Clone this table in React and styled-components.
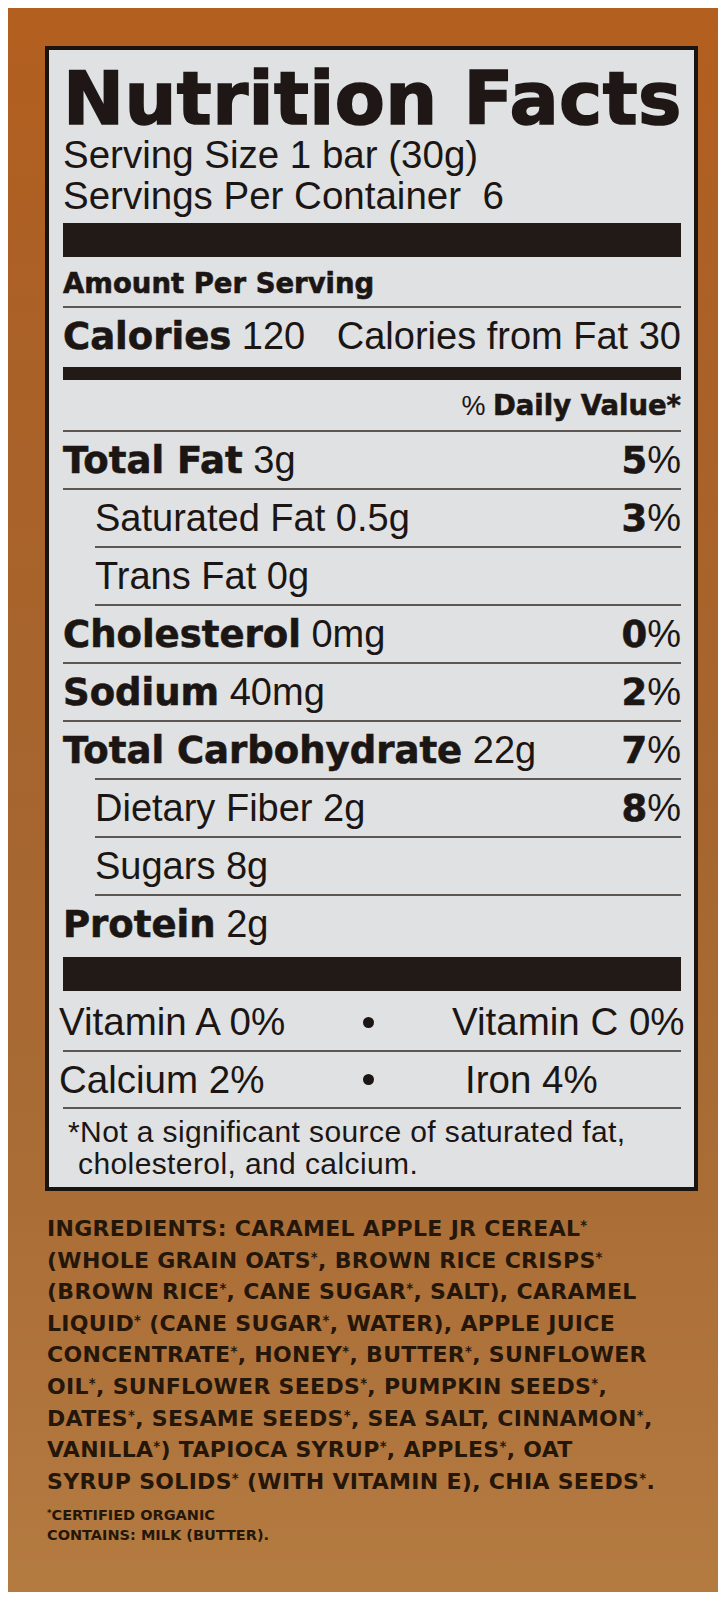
import React from 'react'
import styled, { createGlobalStyle } from 'styled-components'

const GlobalStyle = createGlobalStyle`
  html, body {
    margin: 0;
    padding: 0;
    background: #fff;
  }
  body {
    font-family: 'Liberation Sans', Arial, sans-serif;
    color: #1b1614;
  }
`

const Box = styled.div`
  margin: 8px 9px 8px 8px;
  height: 1584px;
  box-sizing: border-box;
  padding: 38px 0 0 37px;
  background: linear-gradient(
    180deg,
    #b35f1f 0%,
    #ab6127 20%,
    #a6652f 50%,
    #aa6d36 75%,
    #b47b41 100%
  );
`

const Label = styled.section`
  width: 653px;
  box-sizing: border-box;
  border: 4px solid #1a1411;
  background: #dfe1e2;
  padding: 0 13px 7px 14px;
  white-space: nowrap;
`

const Title = styled.h1`
  margin: 0;
  padding-top: 13px;
  font-family: 'DejaVu Sans', sans-serif;
  font-weight: 700;
  font-size: 73px;
  line-height: 71px;
  letter-spacing: 0.4px;
  color: #1e1715;
  -webkit-text-stroke: 1.6px #1e1715;
`

const ServingLine = styled.div`
  font-size: 38.5px;
  line-height: 41px;
`

const Bar = styled.div`
  height: ${p => p.$h}px;
  margin-top: ${p => p.$top}px;
  background: #211a16;
`

const Rule = styled.div`
  height: 2px;
  margin-left: ${p => p.$inset || 0}px;
  background: #5d5753;
`

const SmallHead = styled.div`
  padding-top: ${p => p.$top || 0}px;
  height: ${p => p.$h}px;
  line-height: ${p => p.$h}px;
  text-align: ${p => (p.$right ? 'right' : 'left')};
`

const Row = styled.div`
  display: flex;
  justify-content: space-between;
  align-items: baseline;
  height: ${p => p.$h || 56}px;
  line-height: ${p => p.$h || 56}px;
  padding-left: ${p => p.$indent || 0}px;
`

const Heavy = styled.span`
  font-family: 'DejaVu Sans', sans-serif;
  font-weight: 700;
  font-size: ${p => p.$size || 37}px;
  -webkit-text-stroke: 0.6px #1b1614;
`

const Plain = styled.span`
  font-family: 'Liberation Sans', Arial, sans-serif;
  font-size: ${p => p.$size || 38}px;
`

const VitRow = styled.div`
  display: grid;
  grid-template-columns: 289px 40px 1fr;
  align-items: center;
  padding-top: ${p => p.$top || 0}px;
  height: ${p => p.$h}px;
  line-height: ${p => p.$h}px;
  margin-left: -4px;
  margin-right: -3px;
  font-size: 38.5px;
`

const Dot = styled.span`
  justify-self: center;
  width: 11px;
  height: 11px;
  border-radius: 50%;
  background: #1b1614;
`

const VitRight = styled.span`
  padding-left: ${p => p.$pad}px;
`

const Footnote = styled.p`
  margin: 0;
  padding: 7px 0 0 15px;
  text-indent: -10px;
  font-size: 30px;
  line-height: 32px;
  letter-spacing: 0.4px;
  white-space: normal;
`

const Ingredients = styled.div`
  margin-top: 19px;
  padding-left: 2px;
  font-family: 'DejaVu Sans', sans-serif;
  font-weight: 700;
  font-size: 22px;
  color: #25160a;
  white-space: nowrap;
`

const IngLine = styled.div`
  height: 31.6px;
  line-height: 31.6px;
  letter-spacing: 0.3px;
`

const Star = styled.span`
  font-size: 0.6em;
  vertical-align: 0.45em;
`

const Small = styled.div`
  margin-top: ${p => p.$top || 0}px;
  font-size: 14.5px;
  line-height: 20px;
`

const nutrients = [
  { label: 'Total Fat', amount: '3g', dv: '5', bold: true, rule: 0, indent: 0 },
  { label: 'Saturated Fat', amount: '0.5g', dv: '3', rule: 0, indent: 32 },
  { label: 'Trans Fat', amount: '0g', rule: 32, indent: 32 },
  { label: 'Cholesterol', amount: '0mg', dv: '0', bold: true, rule: 32, indent: 0 },
  { label: 'Sodium', amount: '40mg', dv: '2', bold: true, rule: 0, indent: 0 },
  { label: 'Total Carbohydrate', amount: '22g', dv: '7', bold: true, rule: 0, indent: 0 },
  { label: 'Dietary Fiber', amount: '2g', dv: '8', rule: 32, indent: 32 },
  { label: 'Sugars', amount: '8g', rule: 32, indent: 32 },
  { label: 'Protein', amount: '2g', bold: true, rule: 32, indent: 0 },
]

const ingredientLines = [
  'INGREDIENTS: CARAMEL APPLE JR CEREAL*',
  '(WHOLE GRAIN OATS*, BROWN RICE CRISPS*',
  '(BROWN RICE*, CANE SUGAR*, SALT), CARAMEL',
  'LIQUID* (CANE SUGAR*, WATER), APPLE JUICE',
  'CONCENTRATE*, HONEY*, BUTTER*, SUNFLOWER',
  'OIL*, SUNFLOWER SEEDS*, PUMPKIN SEEDS*,',
  'DATES*, SESAME SEEDS*, SEA SALT, CINNAMON*,',
  'VANILLA*) TAPIOCA SYRUP*, APPLES*, OAT',
  'SYRUP SOLIDS* (WITH VITAMIN E), CHIA SEEDS*.',
]

// split on the asterisks so they can be drawn small like on the box
const withStars = text =>
  text.split('*').map((part, i, all) => (
    <React.Fragment key={i}>
      {part}
      {i < all.length - 1 && <Star>*</Star>}
    </React.Fragment>
  ))

const NutrientRow = ({ n }) => (
  <>
    <Rule $inset={n.rule} />
    <Row $indent={n.indent}>
      <span>
        {n.bold ? <Heavy>{n.label}</Heavy> : <Plain>{n.label}</Plain>}
        <Plain> {n.amount}</Plain>
      </span>
      {n.dv && (
        <span>
          <Heavy>{n.dv}</Heavy>
          <Plain>%</Plain>
        </span>
      )}
    </Row>
  </>
)

export default function App() {
  return (
    <>
      <GlobalStyle />
      <Box>
        <Label>
          <Title>Nutrition Facts</Title>
          <ServingLine>Serving Size 1 bar (30g)</ServingLine>
          <ServingLine>{'Servings Per Container\u00a0\u00a06'}</ServingLine>
          <Bar $h={34} $top={7} />
          <SmallHead $top={4} $h={45}>
            <Heavy $size={27.5}>Amount Per Serving</Heavy>
          </SmallHead>
          <Rule />
          <Row>
            <span>
              <Heavy>Calories</Heavy>
              <Plain> 120</Plain>
            </span>
            <Plain>Calories from Fat 30</Plain>
          </Row>
          <Bar $h={13} $top={3} />
          <SmallHead $h={50} $right>
            <Plain $size={27}>% </Plain>
            <Heavy $size={27.5}>Daily Value*</Heavy>
          </SmallHead>
          {nutrients.map(n => (
            <NutrientRow key={n.label} n={n} />
          ))}
          <Bar $h={34} $top={5} />
          <VitRow $top={3} $h={56}>
            <span>Vitamin A 0%</span>
            <Dot />
            <VitRight $pad={64}>Vitamin C 0%</VitRight>
          </VitRow>
          <Rule />
          <VitRow $h={55}>
            <span>Calcium 2%</span>
            <Dot />
            <VitRight $pad={77}>Iron 4%</VitRight>
          </VitRow>
          <Rule />
          <Footnote>
            *Not a significant source of saturated fat,
            <br />
            cholesterol, and calcium.
          </Footnote>
        </Label>
        <Ingredients>
          {ingredientLines.map(line => (
            <IngLine key={line}>{withStars(line)}</IngLine>
          ))}
          <Small $top={9}>{withStars('*CERTIFIED ORGANIC')}</Small>
          <Small>CONTAINS: MILK (BUTTER).</Small>
        </Ingredients>
      </Box>
    </>
  )
}
